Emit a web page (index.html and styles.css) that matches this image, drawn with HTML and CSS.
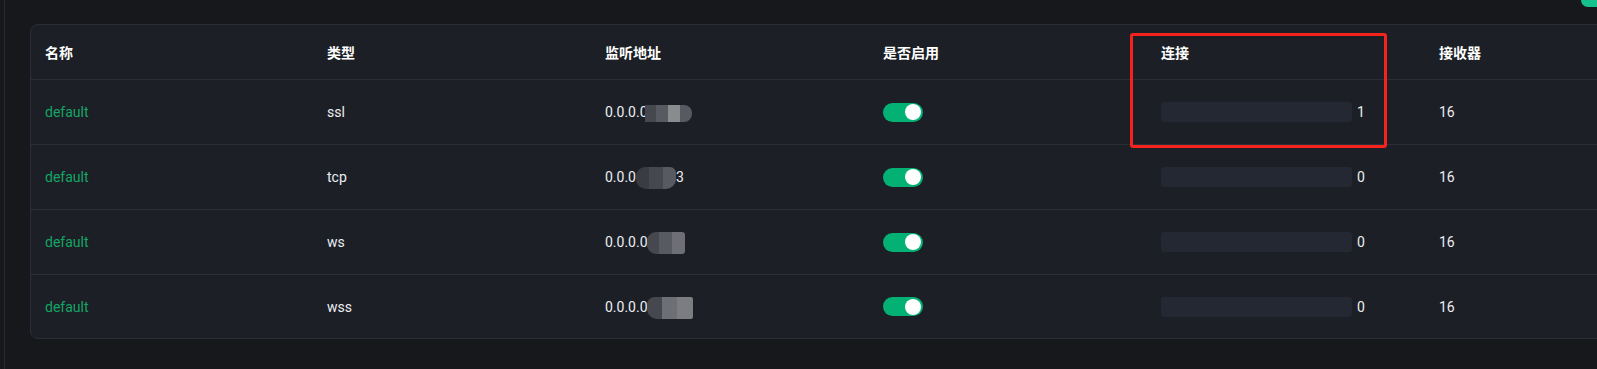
FILE: index.html
```html
<!DOCTYPE html>
<html lang="zh-CN">
<head>
<meta charset="utf-8">
<title>Listeners</title>
<link rel="stylesheet" href="styles.css">
</head>
<body>
<div class="app">
  <aside class="rail"></aside>
  <main class="main">
    <div class="toolbar"><span class="btn-edge"></span></div>
    <section class="card">
      <div class="row head">
        <div class="cell">名称</div>
        <div class="cell">类型</div>
        <div class="cell">监听地址</div>
        <div class="cell">是否启用</div>
        <div class="cell">连接</div>
        <div class="cell">接收器</div>
      </div>
      <div class="row">
        <div class="cell name">default</div>
        <div class="cell">ssl</div>
        <div class="cell addr">0.0.0.0<span class="mosaic mz1"><i class="c1"></i><i class="c2"></i><i class="c3"></i><i class="c2"></i></span></div>
        <div class="cell"><span class="switch"><span class="knob"></span></span></div>
        <div class="cell conn"><span class="track"></span><span class="num">1</span></div>
        <div class="cell">16</div>
      </div>
      <div class="row">
        <div class="cell name">default</div>
        <div class="cell">tcp</div>
        <div class="cell addr">0.0.0<span class="mosaic mz2"><i class="c0"></i><i class="c1"></i><i class="c2"></i></span>3</div>
        <div class="cell"><span class="switch"><span class="knob"></span></span></div>
        <div class="cell conn"><span class="track"></span><span class="num">0</span></div>
        <div class="cell">16</div>
      </div>
      <div class="row">
        <div class="cell name">default</div>
        <div class="cell">ws</div>
        <div class="cell addr">0.0.0.0<span class="mosaic mz3"><i class="c1"></i><i class="c2"></i><i class="c4"></i></span></div>
        <div class="cell"><span class="switch"><span class="knob"></span></span></div>
        <div class="cell conn"><span class="track"></span><span class="num">0</span></div>
        <div class="cell">16</div>
      </div>
      <div class="row last">
        <div class="cell name">default</div>
        <div class="cell">wss</div>
        <div class="cell addr">0.0.0.0<span class="mosaic mz4"><i class="c1"></i><i class="c4"></i><i class="c5"></i></span></div>
        <div class="cell"><span class="switch"><span class="knob"></span></span></div>
        <div class="cell conn"><span class="track"></span><span class="num">0</span></div>
        <div class="cell">16</div>
      </div>
      <div class="annotation"></div>
    </section>
  </main>
</div>
</body>
</html>
```
FILE: styles.css
```css
html, body {
  margin: 0;
  padding: 0;
  background: #17181b;
  overflow: hidden;
}

body {
  font-family: Roboto, "Noto Sans CJK SC", sans-serif;
  font-size: 14px;
  color: #eceef2;
}

.app {
  display: flex;
  width: 1597px;
  height: 369px;
  overflow: hidden;
}

.rail {
  width: 4px;
  flex: none;
  border-right: 1px solid #252930;
}

.main {
  flex: 1;
  padding-left: 25px;
  min-width: 0;
}

.toolbar {
  height: 7px;
  display: flex;
  justify-content: flex-end;
  margin-bottom: 17px;
}

.btn-edge {
  width: 16px;
  height: 7px;
  background: #15c28e;
  border-bottom-left-radius: 8px;
}

.card {
  position: relative;
  width: 1720px;
  background: #1c1f26;
  border: 1px solid #2c2f37;
  border-radius: 8px;
}

.row {
  display: grid;
  grid-template-columns: 282px 278px 278px 278px 278px 1fr;
  height: 64px;
  align-items: center;
  border-bottom: 1px solid #2c2f37;
}

.row.head {
  height: 54px;
  font-weight: 700;
  color: #ffffff;
  font-family: "Noto Sans CJK SC", sans-serif;
}

.row.last {
  height: 63px;
  border-bottom: none;
}

.cell {
  padding-left: 14px;
  white-space: nowrap;
  display: flex;
  align-items: center;
}

.name {
  color: #14a564;
}

.mosaic {
  display: inline-flex;
  overflow: hidden;
}

.mosaic i {
  display: block;
  flex: 1;
  height: 100%;
}

.mz1 {
  width: 47px;
  height: 17px;
  margin-left: -3px;
  margin-top: 2px;
  border-radius: 0 8px 8px 0;
}

.mz2 {
  width: 40px;
  height: 22px;
  margin-top: 2px;
  border-radius: 9px 6px 10px 10px;
}

.mz3 {
  width: 38px;
  height: 22px;
  margin-left: -1px;
  margin-top: 2px;
  border-radius: 9px 3px 3px 9px;
}

.mz4 {
  width: 46px;
  height: 22px;
  margin-left: -1px;
  margin-top: 2px;
  border-radius: 8px 2px 2px 10px;
}

.c0 { background: #3a3c43; }
.c1 { background: #46484f; }
.c2 { background: #575a61; }
.c3 { background: #8a8b8f; }
.c4 { background: #6e6f74; }
.c5 { background: #7c7d81; }

.switch {
  position: relative;
  display: block;
  width: 40px;
  height: 19px;
  border-radius: 10px;
  background: #03b174;
}

.knob {
  position: absolute;
  right: 2px;
  top: 1.5px;
  width: 16px;
  height: 16px;
  border-radius: 50%;
  background: #ffffff;
}

.conn {
  gap: 5px;
}

.track {
  display: block;
  width: 191px;
  height: 20px;
  border-radius: 3px;
  background: #232832;
}

.annotation {
  position: absolute;
  left: 1099px;
  top: 8px;
  width: 251px;
  height: 109px;
  border: 3px solid #f5231b;
  border-radius: 3px;
}
```
